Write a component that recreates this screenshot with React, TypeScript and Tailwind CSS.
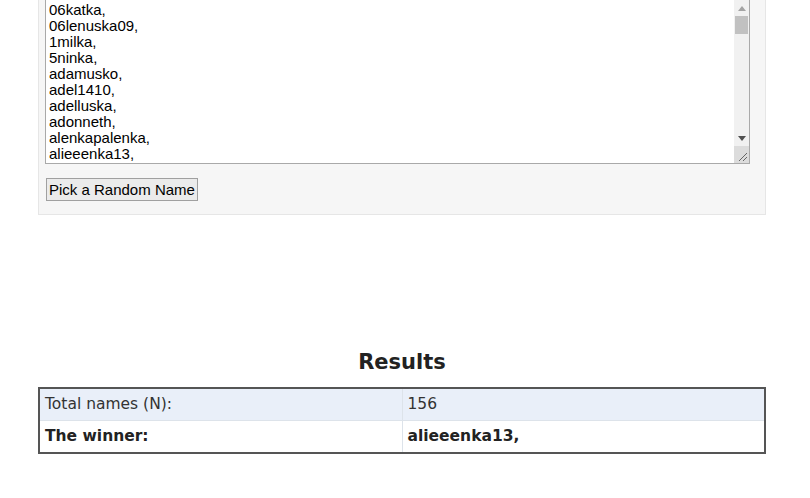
import React from 'react';

const names = [
  '06katka', '06lenuska09', '1milka', '5ninka', 'adamusko', 'adel1410', 'adelluska', 'adonneth',
  'alenkapalenka', 'alieeenka13',
];

const list = names.map((n) => n + ',');

function ScrollArrow({ up, color }: { up?: boolean; color: string }) {
  return (
    <div className="flex h-[15px] items-center justify-center">
      <svg width="8" height="5" viewBox="0 0 8 5">
        <path d={up ? 'M0 5 L4 0 L8 5 Z' : 'M0 0 L8 0 L4 5 Z'} fill={color} />
      </svg>
    </div>
  );
}

export default function App() {
  return (
    <div className="min-h-screen bg-white text-[#222]">
      <div className="ml-[38px] -mt-[8px] w-[728px] border border-[#e6e6e6] bg-[#f6f6f6] pl-[6px] pt-[6px] pb-[13px]">
        {/* textarea look-alike with a classic scrollbar */}
        <div className="flex h-[165px] w-[705px] border border-[#a9a9a9] bg-white">
          <div
            className="flex-1 overflow-hidden px-[3px] py-[2px] text-[15px] leading-[16px] text-black"
            style={{ fontFamily: '"Liberation Sans", Arial, sans-serif' }}
          >
            {list.map((n, i) => (
              <div key={i}>{n}</div>
            ))}
          </div>
          <div className="flex w-[15px] flex-col bg-[#f1f1f1]">
            <div className="pt-[1px]">
              <ScrollArrow up color="#a3a3a3" />
            </div>
            <div className="mx-[1px] h-[18px] bg-[#c1c1c1]" />
            <div className="flex-1" />
            <ScrollArrow color="#505050" />
            <div className="flex h-[17px] items-end justify-end bg-[#dcdcdc] pb-[1px] pr-[1px]">
              <svg width="10" height="10" viewBox="0 0 10 10">
                <path d="M9 1 L1 9 M9 5 L5 9" stroke="#666" strokeWidth="1" />
              </svg>
            </div>
          </div>
        </div>
        <button
          className="mt-[14px] ml-[1px] h-[23px] border border-[#a0a0a0] bg-[#ebebeb] px-[2px] text-[15px] leading-[21px] text-black"
          style={{ fontFamily: '"Liberation Sans", Arial, sans-serif' }}
        >
          Pick a Random Name
        </button>
      </div>

      <div className="ml-[38px] mt-[134px] w-[728px]" style={{ fontFamily: '"DejaVu Sans", Verdana, sans-serif' }}>
        <h2 className="text-center text-[21px] font-bold leading-[26px] text-[#222]">Results</h2>
        <table className="mt-[12px] w-full border-collapse border-2 border-[#555] text-[15.5px]">
          <tbody>
            <tr className="bg-[#e9eff9]">
              <td className="w-1/2 border-b border-[#dde3ea] px-[5px] h-[32px] align-middle text-[#333]">Total names (N):</td>
              <td className="border-b border-l border-[#dde3ea] px-[5px] h-[32px] align-middle text-[#333]">156</td>
            </tr>
            <tr className="bg-white">
              <td className="px-[5px] h-[33px] align-middle font-bold">The winner:</td>
              <td className="border-l border-[#dde3ea] px-[5px] h-[33px] align-middle font-bold">alieeenka13,</td>
            </tr>
          </tbody>
        </table>
      </div>
    </div>
  );
}
